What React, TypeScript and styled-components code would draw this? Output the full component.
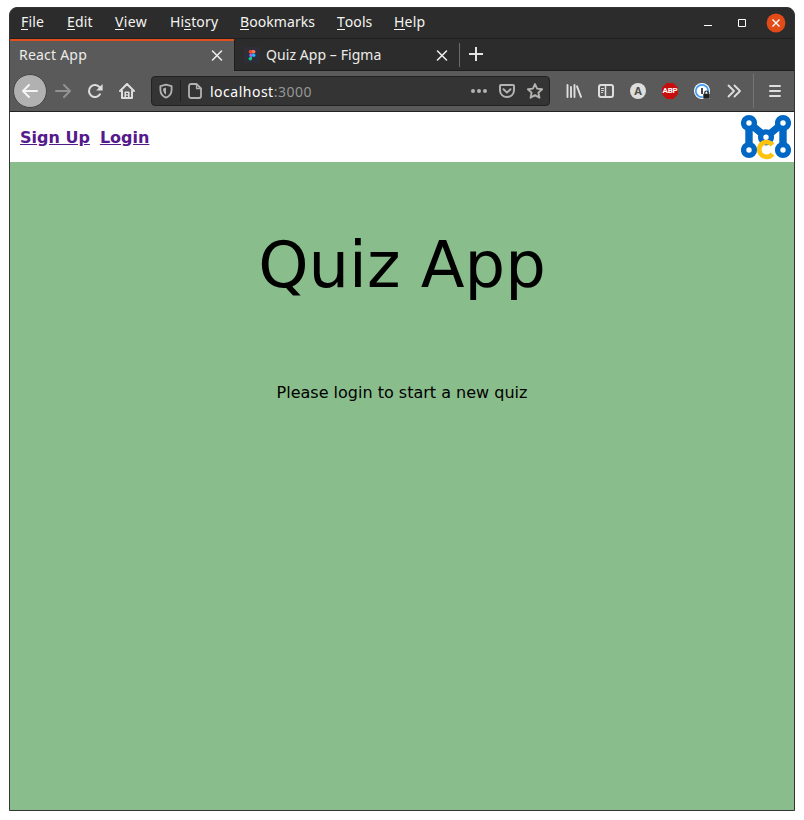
import React from "react";
import styled, { createGlobalStyle } from "styled-components";

const GlobalStyle = createGlobalStyle`
  * { box-sizing: border-box; }
  body { margin: 0; background: #fff; }
`;

const Desktop = styled.main`
  width: 804px;
  height: 820px;
  padding: 7px 9px 9px;
  background: #fff;
`;

const BrowserWindow = styled.div`
  width: 786px;
  height: 804px;
  display: flex;
  flex-direction: column;
  overflow: hidden;
  border: 1px solid #343434;
  border-radius: 8px 8px 0 0;
  background: #2c2c2c;
  font-family: "Noto Sans", "Open Sans", sans-serif;
  font-size: 14px;
`;

const MenuBar = styled.header`
  height: 31px;
  flex: none;
  display: flex;
  align-items: flex-start;
  padding: 0 8px 0 11px;
  color: #f4f4f2;
  border-bottom: 1px solid #202020;
`;

const MenuItem = styled.span<{ $width: number; $tracking: number }>`
  width: ${(p) => p.$width}px;
  margin-right: 22px;
  padding-top: 4px;
  line-height: 20px;
  white-space: nowrap;
  letter-spacing: ${(p) => p.$tracking}px;
`;

const Mnemonic = styled.span`
  display: inline-block;
  height: 18px;
  line-height: 20px;
  vertical-align: top;
  border-bottom: 1px solid #f4f4f2;
`;

const WindowControls = styled.div`
  display: flex;
  align-items: center;
  gap: 14px;
  height: 30px;
  margin-left: auto;
`;

const ControlIcon = styled.svg`
  width: 20px;
  height: 20px;
  display: block;
`;

const TabStrip = styled.div`
  height: 32px;
  flex: none;
  display: flex;
  color: #ececea;
`;

const Tab = styled.div<{ $active?: boolean }>`
  width: ${(p) => (p.$active ? 224 : 225)}px;
  display: flex;
  align-items: center;
  padding: 0 9px;
  background: ${(p) => (p.$active ? "#5a5a5a" : "#2c2c2c")};
  border-top: ${(p) => (p.$active ? "2px solid #e0501d" : "2px solid transparent")};
  border-bottom: ${(p) => (p.$active ? "1px solid #5a5a5a" : "1px solid #1e1e1e")};
  border-left: ${(p) => (p.$active ? "none" : "1px solid #1e1e1e")};
`;

const TabLabel = styled.span<{ $tracking: number }>`
  flex: 1;
  padding-bottom: 2px;
  line-height: 20px;
  white-space: nowrap;
  letter-spacing: ${(p) => p.$tracking}px;
`;

const Favicon = styled.svg`
  width: 16px;
  height: 16px;
  margin: -1px 6px 0 0;
`;

const NewTab = styled.div`
  flex: 1;
  display: flex;
  align-items: center;
  border-bottom: 1px solid #1e1e1e;
`;

const Separator = styled.span<{ $height: number; $color: string }>`
  width: 1px;
  height: ${(p) => p.$height}px;
  background: ${(p) => p.$color};
`;

const NewTabIcon = styled.svg`
  width: 16px;
  height: 16px;
  margin: -1px 0 0 8px;
`;

const Toolbar = styled.nav`
  height: 41px;
  flex: none;
  display: flex;
  align-items: center;
  padding: 0 3px;
  background: #5a5a5a;
  border-bottom: 1px solid #222;
`;

const ToolButton = styled.span<{ $color?: string }>`
  width: 32px;
  height: 32px;
  flex: none;
  display: flex;
  align-items: center;
  justify-content: center;
  color: ${(p) => p.$color || "#dededd"};
`;

const BackButton = styled(ToolButton)`
  width: 34px;
  height: 34px;
  border: 1px solid #454545;
  border-radius: 50%;
  background: #b1b1b1;
  color: #f4f4f4;
`;

const Icon = styled.svg`
  width: 16px;
  height: 16px;
  display: block;
  flex: none;
  fill: none;
  stroke: currentColor;
  stroke-width: 2;
  stroke-linecap: round;
  stroke-linejoin: round;
`;

const AddressBar = styled.div`
  width: 399px;
  height: 30px;
  flex: none;
  margin: 0 8px;
  padding: 0 0 0 6px;
  display: flex;
  align-items: center;
  background: #343434;
  border: 1px solid #222;
  border-radius: 4px;
  color: #b2b2b1;
`;

const AddressIcon = styled.span<{ $width?: number }>`
  width: ${(p) => p.$width || 28}px;
  flex: none;
  display: flex;
  justify-content: center;
`;

const Url = styled.span`
  flex: 1;
  padding: 1px 0 0 7px;
  color: #969696;
  letter-spacing: 0.5px;
  line-height: 20px;
`;

const Host = styled.span`
  color: #fff;
`;

const Badge = styled.span`
  width: 16px;
  height: 16px;
  display: flex;
  align-items: center;
  justify-content: center;
  border-radius: 50%;
  background: #dededd;
  color: #4f4f4f;
  font: bold 11px/16px "Open Sans", sans-serif;
`;

const StopBadge = styled(Badge)`
  border-radius: 0;
  clip-path: polygon(30% 0, 70% 0, 100% 30%, 100% 70%, 70% 100%, 30% 100%, 0 70%, 0 30%);
  background: #c70d0d;
  color: #fff;
  font-family: Roboto, sans-serif;
  font-size: 8px;
  letter-spacing: -0.2px;
`;

const Page = styled.section`
  flex: 1;
  display: flex;
  flex-direction: column;
  background: #8abd8c;
  color: #000;
  font-family: "DejaVu Sans", sans-serif;
  font-size: 16px;
`;

const SiteHeader = styled.header`
  height: 50px;
  display: flex;
  align-items: center;
  gap: 10px;
  padding: 0 3px 0 10px;
  background: #fff;
`;

const SiteLink = styled.a`
  color: #551a8b;
  font-weight: bold;
  line-height: 19px;
  text-decoration: underline;
`;

const Logo = styled.svg`
  width: 50px;
  height: 50px;
  margin-left: auto;
`;

const Title = styled.h1`
  margin: 66px 0 0;
  font-size: 64px;
  font-weight: normal;
  line-height: 75px;
  text-align: center;
`;

const Message = styled.p`
  margin: 80px 0 0;
  line-height: 19px;
  text-align: center;
`;

const menus = [
  { before: "", key: "F", after: "ile", width: 24, tracking: 0.2 },
  { before: "", key: "E", after: "dit", width: 26, tracking: 0.2 },
  { before: "", key: "V", after: "iew", width: 33, tracking: 0.4 },
  { before: "Hi", key: "s", after: "tory", width: 48, tracking: 0.15 },
  { before: "", key: "B", after: "ookmarks", width: 75, tracking: 0.08 },
  { before: "", key: "T", after: "ools", width: 35, tracking: 0.05 },
  { before: "", key: "H", after: "elp", width: 31, tracking: 0.2 },
];

const CloseIcon = () => (
  <Icon viewBox="0 0 16 16">
    <path d="M3.5 3l9 9M12.5 3l-9 9" strokeWidth="1.6" />
  </Icon>
);

export default function App() {
  return (
    <>
      <GlobalStyle />
      <Desktop>
        <BrowserWindow>
          <MenuBar>
            {menus.map((m) => (
              <MenuItem key={m.key} $width={m.width} $tracking={m.tracking}>
                {m.before}
                <Mnemonic>{m.key}</Mnemonic>
                {m.after}
              </MenuItem>
            ))}
            <WindowControls>
              <ControlIcon viewBox="0 0 20 20">
                <path d="M6 12.5h8" stroke="#fff" />
              </ControlIcon>
              <ControlIcon viewBox="0 0 20 20">
                <path d="M6.5 6.5h7v7h-7z" fill="none" stroke="#fff" />
              </ControlIcon>
              <ControlIcon viewBox="0 0 20 20">
                <circle cx="10" cy="10" r="9.4" fill="#e24b17" />
                <path d="M6.5 6.5l7 7M13.5 6.5l-7 7" stroke="#fff" strokeWidth="1.4" />
              </ControlIcon>
            </WindowControls>
          </MenuBar>

          <TabStrip>
            <Tab $active>
              <TabLabel $tracking={0.22}>React App</TabLabel>
              <CloseIcon />
            </Tab>
            <Tab>
              <Favicon viewBox="0 0 16 16">
                <path d="M0 0h16v16H0z" fill="#2d2e39" />
                <path d="M8 3H6.5a1.8 1.8 0 0 0 0 3.6H8z" fill="#f24e1e" />
                <path d="M8 3h1.7a1.8 1.8 0 0 1 0 3.6H8z" fill="#ff7262" />
                <path d="M8 6.6H6.5a1.8 1.8 0 0 0 0 3.4H8z" fill="#a259ff" />
                <circle cx="9.7" cy="8.3" r="1.7" fill="#1abcfe" />
                <path d="M8 10H6.5A1.7 1.7 0 1 0 8 11.7z" fill="#0acf83" />
              </Favicon>
              <TabLabel $tracking={0.07}>Quiz App – Figma</TabLabel>
              <CloseIcon />
            </Tab>
            <NewTab>
              <Separator $height={24} $color="#6b6b6b" />
              <NewTabIcon viewBox="0 0 16 16">
                <path d="M8 1v14M1 8h14" stroke="#e4e4e3" strokeWidth="2" />
              </NewTabIcon>
            </NewTab>
          </TabStrip>

          <Toolbar>
            <BackButton>
              <Icon viewBox="0 0 16 16">
                <path d="M15 8H1.5M7 2L1 8l6 6" />
              </Icon>
            </BackButton>
            <ToolButton $color="#929292">
              <Icon viewBox="0 0 16 16">
                <path d="M1 8h13.5M9 2l6 6-6 6" />
              </Icon>
            </ToolButton>
            <ToolButton>
              <Icon viewBox="0 0 16 16">
                <path d="M13 11.3A6 6 0 1 1 12.6 4.2" />
                <path d="M15.6 1v6.4H9.2z" fill="currentColor" stroke="none" />
              </Icon>
            </ToolButton>
            <ToolButton>
              <Icon viewBox="0 0 16 16">
                <path d="M1 8l7-7 7 7M3 8v7h10V8" />
                <path d="M6.2 15V9.2h3.6V15" strokeWidth="1.6" />
                <path d="M8 11.5v1" strokeWidth="1.2" />
              </Icon>
            </ToolButton>

            <AddressBar>
              <AddressIcon $width={16}>
                <Icon viewBox="0 0 16 16">
                  <path d="M8 1.7l5.6 1.5v3.5c0 4-2 6.5-5.6 8-3.6-1.5-5.6-4-5.6-8V3.2z" strokeWidth="1.8" />
                  <path d="M8 4.6v7.2C6.1 10.5 5.2 8.9 5.2 7V5.4z" fill="currentColor" stroke="none" />
                </Icon>
              </AddressIcon>
              <AddressIcon $width={13}>
                <Separator $height={22} $color="#222" />
              </AddressIcon>
              <AddressIcon $width={16}>
                <Icon viewBox="0 0 16 16">
                  <path d="M4 1h5.5L14 5.5V13a2 2 0 0 1-2 2H4a2 2 0 0 1-2-2V3a2 2 0 0 1 2-2z" strokeWidth="1.8" />
                  <path d="M9.5 1.5v4H14" strokeWidth="1.3" />
                </Icon>
              </AddressIcon>
              <Url>
                <Host>localhost</Host>:3000
              </Url>
              <AddressIcon>
                <Icon viewBox="0 0 16 16">
                  <g fill="currentColor" stroke="none">
                    <circle cx="2" cy="8" r="2" />
                    <circle cx="8" cy="8" r="2" />
                    <circle cx="14" cy="8" r="2" />
                  </g>
                </Icon>
              </AddressIcon>
              <AddressIcon>
                <Icon viewBox="0 0 16 16">
                  <path d="M2 2h12a1 1 0 0 1 1 1v4.2C15 11.2 12 14 8 14S1 11.2 1 7.2V3a1 1 0 0 1 1-1z" />
                  <path d="M4.5 6.2L8 9.6l3.5-3.4" />
                </Icon>
              </AddressIcon>
              <AddressIcon>
                <Icon viewBox="0 0 16 16">
                  <path d="M8 1.1l2.1 4.5 5 .6-3.7 3.4 1 5.1L8 12.200l-4.400 2.500 1-5.100L.9 6.200l5-.6z" strokeWidth="1.9" />
                </Icon>
              </AddressIcon>
            </AddressBar>

            <ToolButton>
              <Icon viewBox="0 0 16 16">
                <path d="M1.5 2v12M5 4v10M8.5 2v12M11 3.3l4 10.5" strokeWidth="1.9" />
              </Icon>
            </ToolButton>
            <ToolButton>
              <Icon viewBox="0 0 16 16">
                <rect x="1" y="2" width="14" height="12" rx="2" />
                <path d="M7.5 2v12" strokeWidth="1.5" />
                <path d="M3.5 5.5h2M3.5 7.500h2M3.500 9.500h1" strokeWidth="1" />
              </Icon>
            </ToolButton>
            <ToolButton>
              <Badge>A</Badge>
            </ToolButton>
            <ToolButton>
              <StopBadge>ABP</StopBadge>
            </ToolButton>
            <ToolButton>
              <Icon viewBox="0 0 16 16">
                <circle cx="8" cy="8" r="8" fill="#fff" stroke="none" />
                <circle cx="8" cy="8" r="6.2" stroke="#3d9bf5" strokeWidth="1.7" />
                <path d="M8 5v6" stroke="#333" strokeWidth="1.8" strokeLinecap="butt" />
                <rect x="9" y="10.5" width="7" height="5.5" rx="1" fill="#222" stroke="#fff" strokeWidth=".5" />
                <path d="M10.800 10.500V9.500c0-2 3.400-2 3.400 0v1" stroke="#222" strokeWidth="1.2" />
              </Icon>
            </ToolButton>
            <ToolButton>
              <Icon viewBox="0 0 16 16">
                <path d="M2.5 2.5L8 8l-5.500 5.500M8.500 2.500L14 8l-5.500 5.500" strokeWidth="1.8" />
              </Icon>
            </ToolButton>
            <AddressIcon $width={7}>
              <Separator $height={34} $color="#747474" />
            </AddressIcon>
            <ToolButton>
              <Icon viewBox="0 0 16 16">
                <path d="M5 3h10M5 8h10M5 13h10" />
              </Icon>
            </ToolButton>
          </Toolbar>

          <Page>
            <SiteHeader>
              <SiteLink href="#signup">Sign Up</SiteLink>
              <SiteLink href="#login">Login</SiteLink>
              <Logo viewBox="0 0 50 50">
                <g fill="none" stroke="#0067c5">
                  <path d="M8 11v27M42 11v27M8 11l17 14L42 11" strokeWidth="7.4" />
                  <g fill="#fff" strokeWidth="5.4">
                    <circle cx="8" cy="11" r="5.4" />
                    <circle cx="42" cy="11" r="5.4" />
                    <circle cx="8" cy="38" r="5.4" />
                    <circle cx="42" cy="38" r="5.4" />
                    <circle cx="25" cy="25.3" r="5.4" />
                  </g>
                </g>
                <path d="M31.500 33a7.400 7.400 0 1 0 0 9" fill="none" stroke="#ffc20e" strokeWidth="4.6" />
              </Logo>
            </SiteHeader>
            <Title>Quiz App</Title>
            <Message>Please login to start a new quiz</Message>
          </Page>
        </BrowserWindow>
      </Desktop>
    </>
  );
}
